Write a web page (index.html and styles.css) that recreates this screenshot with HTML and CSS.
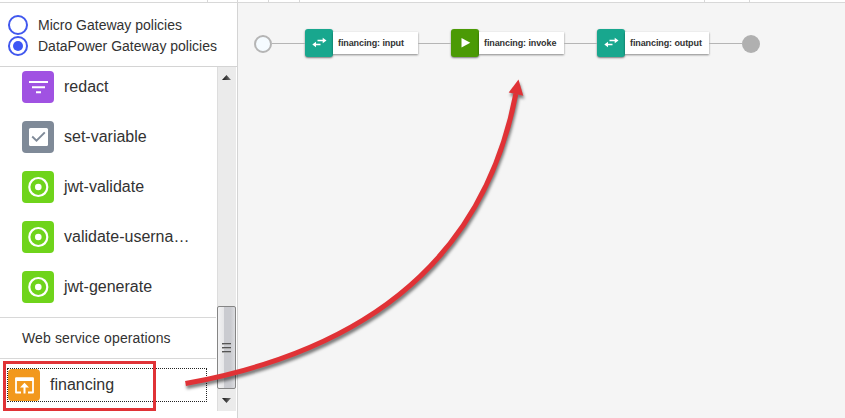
FILE: index.html
```html
<!DOCTYPE html>
<html lang="en">
<head>
<meta charset="utf-8">
<title>Assembly</title>
<link rel="stylesheet" href="styles.css">
</head>
<body>
<svg class="defs" width="0" height="0">
  <symbol id="target" viewBox="0 0 32 32"><circle cx="16.3" cy="16" r="9" fill="none" stroke="#fff" stroke-width="2.2"/><circle cx="16.3" cy="16" r="3.3" fill="#fff"/></symbol>
  <symbol id="swap" viewBox="0 0 28 28"><path d="M12.500 11.500H19M9 15.500H15.500" stroke="#fff" stroke-width="1.5"/><path d="M17.700 8.700L21.500 11.500L17.700 14.300zM11 12.700L7.300 15.500L11 18.300z" fill="#fff"/></symbol>
</svg>
<div class="app">
  <header class="topbar"><i class="t1"></i><i class="t2"></i><i class="t3"></i><i class="t4"></i><i class="t5"></i><i class="t6"></i></header>
  <div class="main">
    <aside class="sidebar">
      <div class="filters">
        <label class="radio"><span class="dot"></span><span>Micro Gateway policies</span></label>
        <label class="radio"><span class="dot on"></span><span>DataPower Gateway policies</span></label>
      </div>
      <div class="scroller">
        <div class="content">
          <ul class="policies">
            <li><svg class="icon purple" viewBox="0 0 32 32"><path d="M7 11H26M10 16.3H23M14 21.3H19" stroke="#fff" stroke-width="2"/></svg><span>redact</span></li>
            <li><svg class="icon gray" viewBox="0 0 32 32"><rect x="7" y="7" width="19" height="18" rx="1.5" fill="#fff"/><path d="M10.2 15.5L14.5 19.7L22.8 11.3" fill="none" stroke="#7f8a98" stroke-width="1.9"/></svg><span>set-variable</span></li>
            <li><svg class="icon green"><use href="#target"/></svg><span>jwt-validate</span></li>
            <li><svg class="icon green"><use href="#target"/></svg><span>validate-userna…</span></li>
            <li><svg class="icon green"><use href="#target"/></svg><span>jwt-generate</span></li>
          </ul>
          <h2 class="section">Web service operations</h2>
          <div class="operation"><svg class="icon orange" viewBox="0 0 32 32"><path d="M13 23.500H8V9.500H25V23.500H20" fill="none" stroke="#fff" stroke-width="1.800" stroke-linejoin="round"/><path d="M7.500 8.500H25.500V12H7.500z" fill="#fff"/><path d="M16.500 24.500V17" stroke="#fff" stroke-width="2"/><path d="M12 18.500L16.500 13.800L21 18.500z" fill="#fff"/></svg><span>financing</span></div>
        </div>
        <div class="scrollbar">
          <span class="arrow up"></span>
          <span class="thumb"><i></i><i></i><i></i></span>
          <span class="arrow down"></span>
        </div>
      </div>
    </aside>
    <section class="canvas">
      <div class="flow">
        <span class="start"></span><span class="wire w1"></span>
        <div class="node"><svg class="tile teal"><use href="#swap"/></svg><span class="label">financing: input</span></div>
        <span class="wire w2"></span>
        <div class="node"><svg class="tile invoke" viewBox="0 0 28 28"><path d="M10.500 9L19.300 13.700L10.500 18.400z" fill="#fff"/></svg><span class="label">financing: invoke</span></div>
        <span class="wire w3"></span>
        <div class="node last"><svg class="tile teal"><use href="#swap"/></svg><span class="label">financing: output</span></div>
        <span class="wire w4"></span><span class="end"></span>
      </div>
    </section>
  </div>
</div>
<svg class="annotations" width="845" height="418" viewBox="0 0 845 418">
  <rect x="4.5" y="362.5" width="150" height="47" fill="none" stroke="#e03236" stroke-width="3"/>
  <g class="callout"><path d="M185.500 383.500Q470 332 515.800 94" fill="none" stroke="#e03236" stroke-width="5"/><path d="M518.500 79.500L523.300 95.800L508.700 92.500z" fill="#e03236"/></g>
</svg>
</body>
</html>
```
FILE: styles.css
```css
* { box-sizing: border-box; }
body { margin: 0; font-family: "Liberation Sans", Arial, sans-serif; color: #323232; background: #fff; }
.defs { position: absolute; }
.app { width: 845px; height: 418px; display: flex; flex-direction: column; overflow: hidden; }
.topbar { height: 3px; flex: none; border-bottom: 1px solid #d8d8d8; display: flex; }
.topbar i { width: 1px; height: 2px; background: #d8d8d8; }
.t1 { margin-left: 207px; }
.t2 { margin-left: 29px; }
.t3 { margin-left: 30px; }
.t4 { margin-left: 30px; }
.t5 { margin-left: 404px; }
.t6 { margin-left: 44px; }
.main { flex: 1; display: flex; min-height: 0; }
.sidebar { width: 238px; border-right: 1px solid #d4d4d4; background: #fff; }
.filters { height: 64px; padding: 11px 0 0 8px; border-bottom: 1px solid #d4d4d4; }
.radio { display: flex; align-items: center; gap: 10px; height: 21px; font-size: 14px; white-space: nowrap; }
.dot { width: 20px; height: 20px; border: 2px solid #4158ee; border-radius: 50%; display: grid; place-items: center; flex: none; }
.dot.on::after { content: ""; width: 10px; height: 10px; border-radius: 50%; background: #3d56f5; }
.scroller { display: flex; height: 344px; }
.content { width: 217px; padding-right: 1px; }
.policies { list-style: none; margin: 0; padding: 4px 0 0 22px; height: 250px; }
.policies li { display: flex; align-items: center; gap: 10px; height: 32px; margin-bottom: 18px; font-size: 16px; }
.icon { width: 32px; height: 32px; border-radius: 4px; flex: none; }
.purple { background: #a052e2; }
.gray { background: #7f8a98; }
.green { background: #6fd41b; }
.orange { background: #f2981d; }
.section { margin: 0; height: 42px; padding-left: 22px; border: solid #d8d8d8; border-width: 1px 0; font-size: 14px; line-height: 40px; font-weight: normal; letter-spacing: .12px; }
.operation { margin: 9px 0 0 7px; width: 200px; height: 34px; border: 1px dotted #222; display: flex; align-items: center; gap: 10px; font-size: 16px; }
.scrollbar { width: 19px; height: 344px; background: #ebebeb; border-left: 1px solid #ddd; display: flex; flex-direction: column; }
.arrow { margin-left: 4px; width: 9px; height: 5px; background: linear-gradient(90deg, #111, #777); }
.up { margin-top: 8px; clip-path: polygon(50% 0, 100% 100%, 0 100%); }
.thumb { margin-top: 226px; width: 19px; height: 83px; margin-left: -1px; border: 1px solid #858585; border-radius: 2px; background: linear-gradient(90deg, #f2f2f3 0, #e6e6e8 35%, #cacbd0 37% 75%, #dcdde0); display: flex; flex-direction: column; align-items: center; justify-content: center; gap: 2px; padding-right: 1px; }
.thumb i { width: 9px; height: 2px; background: linear-gradient(#555 50%, #aaa 50%); }
.down { margin-top: 9px; clip-path: polygon(0 0, 100% 0, 50% 100%); }
.canvas { flex: 1; background: #f5f5f5; padding: 26px 0 0 16px; }
.flow { display: flex; align-items: center; height: 28px; }
.start, .end { width: 18px; height: 18px; border-radius: 50%; flex: none; position: relative; top: 1px; }
.start { border: 2px solid #b5b5b5; background: #f5fbff; }
.end { background: #b0b0b0; }
.wire { height: 1px; background: #b5b5b5; flex: none; position: relative; top: .5px; }
.w1, .w2, .w3, .w4 { width: 33px; }
.node { display: flex; align-items: center; flex: none; width: 113px; }
.node.last { width: 112px; }
.tile { width: 28px; height: 28px; border-radius: 3px; flex: none; box-shadow: 0 1px 2px rgba(0,0,0,.5); }
.teal { background: #18a78e; }
.invoke { background: #4b9a05; }
.label { flex: 1; min-width: 0; height: 22px; background: #fff; box-shadow: 0 1px 2px rgba(0,0,0,.45); padding-left: 5px; font-size: 9px; line-height: 22px; font-weight: bold; white-space: nowrap; letter-spacing: -.1px; }
.annotations { position: absolute; left: 0; top: 0; pointer-events: none; }
.callout { filter: drop-shadow(1px 3px 1.5px rgba(0,0,0,.5)); }
```
